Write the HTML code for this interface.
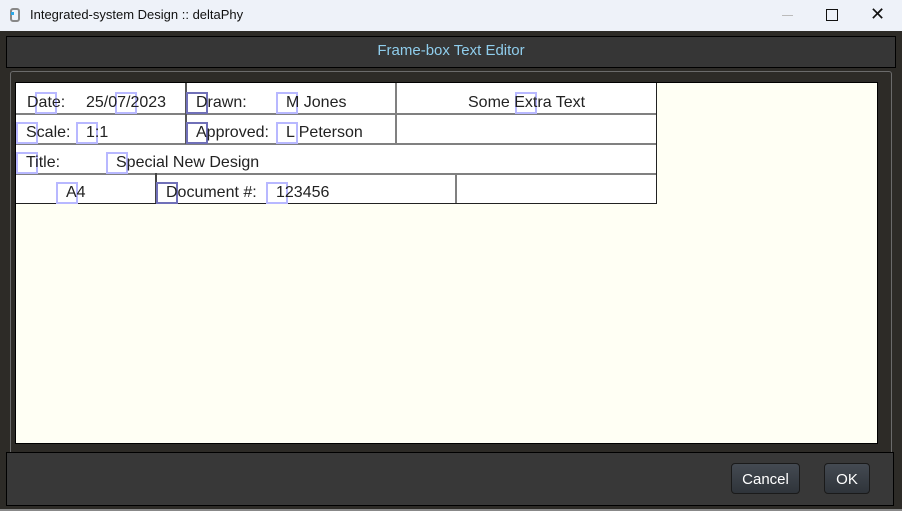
<!DOCTYPE html><html><head><style>
body{margin:0;width:902px;height:512px;position:relative;overflow:hidden;background:#fff;font-family:"Liberation Sans",sans-serif}
.a{position:absolute}
.t{position:absolute;font-size:16px;color:#222;line-height:18px;white-space:nowrap}
.b{position:absolute;width:18px;height:18px;border:2px solid #b8b8ff}
.l{position:absolute;background:#808080}
.btn{position:absolute;top:463px;height:31px;border:1px solid #1a1a1a;border-radius:4px;background:linear-gradient(#444a52,#2f343a);color:#fff;font-size:15px;line-height:31px;text-align:center;box-sizing:border-box}
</style></head><body>
<div class="a" style="left:0;top:0;width:902px;height:31px;background:#eef2f9"></div>
<div class="a" style="left:10px;top:8px;width:10px;height:14px;border:2px solid #888;border-radius:3px;box-sizing:border-box"></div>
<div class="a" style="left:11px;top:12px;width:3px;height:3px;background:#2aa7e8"></div>
<div class="a" style="left:30px;top:7px;font-size:13px;color:#111">Integrated-system Design :: deltaPhy</div>
<div class="a" style="left:782px;top:15px;width:11px;height:1px;background:#bbb"></div>
<div class="a" style="left:826px;top:9px;width:10px;height:10px;border:1px solid #111"></div>
<div class="a" style="left:870px;top:4px;font-size:18px;color:#111">✕</div>
<div class="a" style="left:0;top:31px;width:902px;height:478px;background:#2d2b27;border-bottom:2px solid #888"></div>
<div class="a" style="left:6px;top:36px;width:888px;height:30px;background:#363636;border:1px solid #000"></div>
<div class="a" style="left:0;top:42px;width:902px;text-align:center;font-size:15px;color:#8fcdec">Frame-box Text Editor</div>
<div class="a" style="left:10px;top:71px;width:880px;height:390px;border:1px solid #6b6b6b;border-radius:3px"></div>
<div class="a" style="left:15px;top:82px;width:861px;height:360px;background:#fffff4;border:1px solid #000"></div>
<div class="a" style="left:16px;top:83px;width:641px;height:121px;background:#fff;border-right:1px solid #222;border-bottom:1px solid #222;box-sizing:border-box"></div>
<div class="l" style="left:16px;top:113px;width:640px;height:2px"></div>
<div class="l" style="left:16px;top:143px;width:640px;height:2px"></div>
<div class="l" style="left:16px;top:173px;width:640px;height:2px"></div>
<div class="l" style="left:185px;top:83px;width:2px;height:61px;background:#555"></div>
<div class="l" style="left:395px;top:83px;width:2px;height:61px"></div>
<div class="l" style="left:155px;top:173px;width:2px;height:30px;background:#444"></div>
<div class="l" style="left:455px;top:173px;width:2px;height:30px"></div>
<div class="b" style="left:35px;top:92px"></div><div class="b" style="left:115px;top:92px"></div>
<div class="b" style="left:186px;top:92px;border-color:#7070b8"></div><div class="b" style="left:276px;top:92px"></div>
<div class="b" style="left:515px;top:92px"></div>
<div class="b" style="left:16px;top:122px"></div><div class="b" style="left:76px;top:122px"></div>
<div class="b" style="left:186px;top:122px;border-color:#7070b8"></div><div class="b" style="left:276px;top:122px"></div>
<div class="b" style="left:16px;top:152px"></div><div class="b" style="left:106px;top:152px"></div>
<div class="b" style="left:56px;top:182px"></div><div class="b" style="left:156px;top:182px;border-color:#7070b8"></div><div class="b" style="left:266px;top:182px"></div>
<div class="t" style="left:27px;top:94px">Date:</div><div class="t" style="left:86px;top:94px">25/07/2023</div>
<div class="t" style="left:196px;top:94px">Drawn:</div><div class="t" style="left:286px;top:94px">M Jones</div>
<div class="t" style="left:468px;top:94px">Some Extra Text</div>
<div class="t" style="left:26px;top:124px">Scale:</div><div class="t" style="left:86px;top:124px">1:1</div>
<div class="t" style="left:196px;top:124px">Approved:</div><div class="t" style="left:286px;top:124px">L Peterson</div>
<div class="t" style="left:26px;top:154px">Title:</div><div class="t" style="left:116px;top:154px">Special New Design</div>
<div class="t" style="left:66px;top:184px">A4</div><div class="t" style="left:166px;top:184px">Document #:</div><div class="t" style="left:276px;top:184px">123456</div>
<div class="a" style="left:6px;top:452px;width:888px;height:54px;background:#383838;border:1px solid #000;box-sizing:border-box"></div>
<div class="btn" style="left:731px;width:69px">Cancel</div>
<div class="btn" style="left:824px;width:46px">OK</div>
</body></html>
